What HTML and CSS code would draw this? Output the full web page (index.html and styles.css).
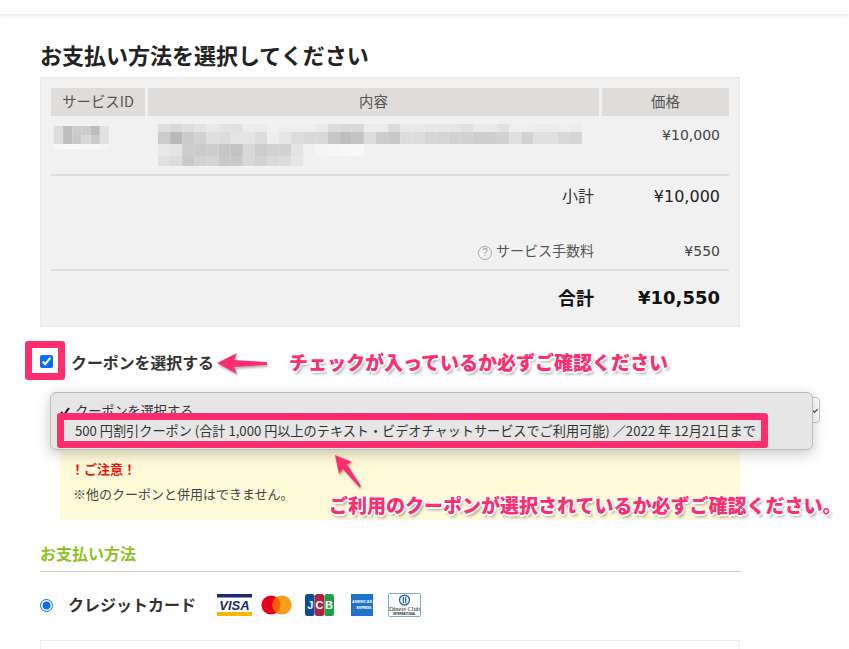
FILE: index.html
```html
<!DOCTYPE html>
<html lang="ja">
<head>
    <meta charset="UTF-8">
    <meta name="viewport" content="width=device-width, initial-scale=1.0">
    <title>お支払い方法を選択してください</title>
    <link rel="stylesheet" href="styles.css">
</head>
<body>
    <div class="page">
        <div class="topbar"></div>

        <div class="content">
            <h1>お支払い方法を選択してください</h1>

            <div class="summary">
                <div class="summary-grid">
                    <div class="th">サービスID</div>
                    <div class="th">内容</div>
                    <div class="th">価格</div>
                </div>
                <div class="summary-grid item-row">
                    <div>
                        <svg class="blur-id" viewBox="0 0 6 23" preserveAspectRatio="none">
                            <g class="r-id1"><rect x="0" fill="#dcdcdc"/><rect x="1" fill="#bebebe"/><rect x="2" fill="#cccccc"/><rect x="3" fill="#cccccc"/><rect x="4" fill="#bcbcbc"/><rect x="5" fill="#e2e2e2"/></g>
                            <g class="r-id2"><rect x="0" fill="#dcdcdc"/><rect x="1" fill="#bebebe"/><rect x="2" fill="#c8c8c8"/><rect x="3" fill="#d8d8d8"/><rect x="4" fill="#cccccc"/><rect x="5" fill="#e2e2e2"/></g>
                            <g class="r-id3"><rect x="0" fill="#f8f8f8"/><rect x="1" fill="#fbfbfb"/><rect x="2" fill="#fafafa"/><rect x="3" fill="#f8f8f8"/><rect x="4" fill="#f8f8f8"/><rect x="5" fill="#f4f4f4"/></g>
                        </svg>
                    </div>
                    <div>
                        <svg class="blur-text" viewBox="0 0 35 42" preserveAspectRatio="none">
                            <g class="r1">
                                <rect x="0" fill="#dedede"/><rect x="1" fill="#d8d8d8"/><rect x="2" fill="#dedede"/><rect x="3" fill="#e3e3e3"/><rect x="4" fill="#e8e8e8"/><rect x="5" fill="#e3e3e3"/><rect x="6" fill="#e0e0e0"/><rect x="7" fill="#ececec"/><rect x="8" fill="#ebebeb"/><rect x="9" fill="#f0f0f0"/><rect x="10" fill="#eeeeee"/><rect x="11" fill="#eeeeee"/><rect x="12" fill="#eeeeee"/><rect x="13" fill="#e8e8e8"/><rect x="14" fill="#dcdcdc"/><rect x="15" fill="#d8d8d8"/><rect x="16" fill="#d8d8d8"/><rect x="17" fill="#ececec"/><rect x="18" fill="#ececec"/><rect x="19" fill="#dcdcdc"/><rect x="20" fill="#e8e8e8"/><rect x="21" fill="#e8e8e8"/><rect x="22" fill="#e6e6e6"/><rect x="23" fill="#e6e6e6"/><rect x="24" fill="#e6e6e6"/><rect x="25" fill="#e0e0e0"/><rect x="26" fill="#eaeaea"/><rect x="27" fill="#e8e8e8"/><rect x="28" fill="#e2e2e2"/><rect x="29" fill="#eeeeee"/><rect x="30" fill="#eeeeee"/><rect x="31" fill="#ececec"/><rect x="32" fill="#ececec"/><rect x="33" fill="#eeeeee"/><rect x="34" fill="#ececec"/>
                            </g>
                            <g class="r2">
                                <rect x="0" fill="#cccccc"/><rect x="1" fill="#b9b9b9"/><rect x="2" fill="#cacaca"/><rect x="3" fill="#d2d2d2"/><rect x="4" fill="#dedede"/><rect x="5" fill="#dcdcdc"/><rect x="6" fill="#e4e4e4"/><rect x="7" fill="#e4e4e4"/><rect x="8" fill="#dcdcdc"/><rect x="9" fill="#eeeeee"/><rect x="10" fill="#e6e6e6"/><rect x="11" fill="#dcdcdc"/><rect x="12" fill="#d8d8d8"/><rect x="13" fill="#d8d8d8"/><rect x="14" fill="#c6c6c6"/><rect x="15" fill="#bebebe"/><rect x="16" fill="#c4c4c4"/><rect x="17" fill="#dcdcdc"/><rect x="18" fill="#cccccc"/><rect x="19" fill="#c8c8c8"/><rect x="20" fill="#dcdcdc"/><rect x="21" fill="#dcdcdc"/><rect x="22" fill="#d6d6d6"/><rect x="23" fill="#d4d4d4"/><rect x="24" fill="#d2d2d2"/><rect x="25" fill="#d2d2d2"/><rect x="26" fill="#cecece"/><rect x="27" fill="#cecece"/><rect x="28" fill="#d2d2d2"/><rect x="29" fill="#e0e0e0"/><rect x="30" fill="#d2d2d2"/><rect x="31" fill="#e0e0e0"/><rect x="32" fill="#e0e0e0"/><rect x="33" fill="#d8d8d8"/><rect x="34" fill="#d6d6d6"/>
                            </g>
                            <g class="r3">
                                <rect x="0" fill="#e8e8e8"/><rect x="1" fill="#e4e4e4"/><rect x="2" fill="#cccccc"/><rect x="3" fill="#cacaca"/><rect x="4" fill="#cccccc"/><rect x="5" fill="#c6c6c6"/><rect x="6" fill="#c2c2c2"/><rect x="7" fill="#d8d8d8"/><rect x="8" fill="#cccccc"/><rect x="9" fill="#d2d2d2"/><rect x="10" fill="#d2d2d2"/><rect x="11" fill="#e4e4e4"/><rect x="12" fill="#f0f0f0"/><rect x="13" fill="#f5f5f5"/><rect x="14" fill="#f6f6f6"/><rect x="15" fill="#f8f8f8"/><rect x="16" fill="#f8f8f8"/>
                            </g>
                            <g class="r4">
                                <rect x="0" fill="#e0e0e0"/><rect x="1" fill="#dcdcdc"/><rect x="2" fill="#c8c8c8"/><rect x="3" fill="#d2d2d2"/><rect x="4" fill="#d4d4d4"/><rect x="5" fill="#c8c8c8"/><rect x="6" fill="#c8c8c8"/><rect x="7" fill="#d8d8d8"/><rect x="8" fill="#d2d2d2"/><rect x="9" fill="#dadada"/><rect x="10" fill="#dcdcdc"/><rect x="11" fill="#e6e6e6"/><rect x="12" fill="#f0f0f0"/>
                            </g>
                        </svg>
                    </div>
                    <div class="price">¥10,000</div>
                </div>
                <div class="summary-grid subtotal-row">
                    <div class="row-label">小計</div>
                    <div class="subtotal-value">¥10,000</div>
                </div>
                <div class="summary-grid fee-row">
                    <div class="row-label fee-label">
                        <span class="help-icon">?</span>
                        <span>サービス手数料</span>
                    </div>
                    <div class="price">¥550</div>
                </div>
                <div class="summary-grid total-row">
                    <div class="row-label total-label">合計</div>
                    <div class="total-value">¥10,550</div>
                </div>
            </div>

            <label class="coupon-row">
                <input type="checkbox" checked>
                <span>クーポンを選択する</span>
            </label>

            <div class="coupon-select"><span class="select-arrow"></span></div>

            <div class="notice">
                <p class="notice-title">！ご注意！</p>
                <p class="notice-text">※他のクーポンと併用はできません。</p>
            </div>

            <h2 class="pay-title">お支払い方法</h2>

            <div class="pay-row">
                <input type="radio" name="pay" checked>
                <span class="pay-name">クレジットカード</span>
                <div class="cards">
                    <svg class="card" width="35" height="22" viewBox="0 0 35 22">
                        <rect width="35" height="3.5" fill="#1a2a6c"/>
                        <rect y="18" width="35" height="4" fill="#f7b600"/>
                        <text x="17.5" y="15.5" class="visa-text">VISA</text>
                    </svg>
                    <svg class="card" width="31" height="20" viewBox="0 0 31 20">
                        <circle cx="10" cy="10" r="9.6" fill="#eb001b"/>
                        <circle cx="21" cy="10" r="9.6" fill="#f79e1b"/>
                        <path d="M15.5 2.2a9.6 9.6 0 0 1 0 15.6a9.6 9.6 0 0 1 0-15.6z" fill="#ff5f00"/>
                    </svg>
                    <svg class="card" width="29" height="22" viewBox="0 0 29 22">
                        <rect x="0" width="9.6" height="22" rx="2.5" fill="#0e4c96"/>
                        <rect x="9.8" width="9.4" height="22" rx="2.5" fill="#b1203c"/>
                        <rect x="19.4" width="9.6" height="22" rx="2.5" fill="#1f9e46"/>
                        <text x="5.4" y="15" class="jcb-text">J</text>
                        <text x="14.5" y="15" class="jcb-text">C</text>
                        <text x="24" y="15" class="jcb-text">B</text>
                    </svg>
                    <svg class="card" width="22" height="22" viewBox="0 0 22 22">
                        <rect width="22" height="22" fill="#1f72cd"/>
                        <text x="11" y="9" class="amex-text" textLength="20">AMERICAN</text>
                        <text x="13" y="15" class="amex-text" textLength="15">EXPRESS</text>
                    </svg>
                    <svg class="card" width="33" height="24" viewBox="0 0 33 24">
                        <rect x="0.5" y="0.5" width="32" height="23" rx="1" fill="#fff" stroke="#7fa9c9"/>
                        <circle cx="16.5" cy="7" r="5.6" fill="#1c5a9c"/>
                        <circle cx="16.5" cy="7" r="4.3" fill="#fff"/>
                        <rect x="14.7" y="3.8" width="1.2" height="6.4" fill="#1c5a9c"/>
                        <rect x="17.1" y="3.8" width="1.2" height="6.4" fill="#1c5a9c"/>
                        <text x="16.5" y="17.5" class="diners-text">Diners Club</text>
                        <text x="16.5" y="21.5" class="diners-small">INTERNATIONAL</text>
                    </svg>
                </div>
            </div>

            <div class="card-form"></div>
        </div>

        <!-- 開いた状態のセレクト -->
        <div class="popup">
            <div class="popup-item popup-first">
                <svg class="tick" width="10" height="9" viewBox="0 0 10 9"><polyline points="1,5 3.8,8 9,1"/></svg>クーポンを選択する
            </div>
            <div class="popup-item popup-second">500 円割引クーポン (合計 1,000 円以上のテキスト・ビデオチャットサービスでご利用可能) ／2022 年 12月21日まで</div>
        </div>

        <!-- 注釈 -->
        <div class="mark mark-check"></div>
        <div class="mark mark-coupon"></div>
        <svg class="arrow arrow-left" width="54" height="26" viewBox="0 0 54 26">
            <polygon points="1,11 21,1 18,8 51,10 51,13 18,15 21,22"/>
        </svg>
        <svg class="arrow arrow-up" width="30" height="38" viewBox="0 0 30 38">
            <polygon points="1,1 18,8 13,10.5 27,32 25.5,33.5 9,15 5,20"/>
        </svg>
        <div class="note note-check">チェックが入っているか必ずご確認ください</div>
        <div class="note note-coupon">ご利用のクーポンが選択されているか必ずご確認ください。</div>
    </div>
</body>
</html>
```

FILE: styles.css
```css
html, body {
    margin: 0;
    padding: 0;
    height: 649px;
    overflow: hidden;
    background: #fff;
}
body {
    font-family: "Noto Sans CJK JP", "Noto Sans", sans-serif;
    color: #333;
}
p, h1, h2 {
    margin: 0;
}
.page {
    position: relative;
    height: 649px;
    overflow: hidden;
}
.topbar {
    height: 14px;
    background: #fff;
    box-shadow: 0 1px 5px rgba(0,0,0,0.1);
}
.content {
    width: 700px;
    margin-left: 40px;
}
h1 {
    margin-top: 26px;
    font-size: 22px;
    line-height: 28px;
    font-weight: 700;
    color: #222;
}

/* 明細 */
.summary {
    box-sizing: border-box;
    height: 250px;
    margin-top: 9px;
    padding: 10px;
    background: #f1f1f1;
    border: 1px solid #eaeaea;
}
.summary-grid {
    display: grid;
    grid-template-columns: 94px 451px 127px;
    column-gap: 3px;
}
.th {
    box-sizing: border-box;
    height: 28px;
    line-height: 25px;
    background: #dfdcda;
    color: #555;
    font-size: 14.4px;
    text-align: center;
}
.item-row {
    height: 58px;
    border-bottom: 2px solid #dddddd;
}
.blur-id {
    display: block;
    width: 55px;
    height: 23px;
    margin: 10px 0 0 3px;
}
.r-id1 rect { y: 0; height: 9px; width: 1px; }
.r-id2 rect { y: 9px; height: 9px; width: 1px; }
.r-id3 rect { y: 18px; height: 5px; width: 1px; }
.blur-text {
    display: block;
    width: 424px;
    height: 42px;
    margin: 8px 0 0 10px;
}
.r1 rect { y: 0; height: 8px; width: 1px; }
.r2 rect { y: 8px; height: 12px; width: 1px; }
.r3 rect { y: 20px; height: 12px; width: 1px; }
.r4 rect { y: 32px; height: 10px; width: 1px; }
.price {
    padding: 9px 9px 0 0;
    font-family: "DejaVu Sans", sans-serif;
    font-size: 14px;
    line-height: 20px;
    text-align: right;
    color: #444;
}
.row-label {
    grid-column: 1 / 3;
    padding-right: 5px;
    padding-bottom: 2px;
    text-align: right;
    font-size: 16px;
    color: #333;
}
.subtotal-row {
    height: 40px;
    align-items: center;
}
.subtotal-value {
    padding-right: 9px;
    font-family: "DejaVu Sans", sans-serif;
    font-size: 16px;
    text-align: right;
    color: #222;
}
.fee-row {
    box-sizing: border-box;
    height: 55px;
    border-bottom: 2px solid #dddddd;
    align-items: end;
    padding-bottom: 8px;
}
.fee-row .price {
    padding-top: 0;
}
.fee-label {
    display: flex;
    justify-content: flex-end;
    align-items: center;
    gap: 4px;
    box-sizing: border-box;
    height: 20px;
    font-size: 14px;
    color: #555;
}
.help-icon {
    box-sizing: border-box;
    width: 14px;
    height: 14px;
    margin-top: 5px;
    border: 1px solid #aaa;
    border-radius: 50%;
    font-family: "Liberation Sans", sans-serif;
    font-size: 10px;
    line-height: 12px;
    text-align: center;
    color: #999;
}
.total-row {
    height: 53px;
    align-items: center;
}
.total-label {
    font-size: 18px;
    font-weight: 700;
    color: #111;
}
.total-value {
    padding-right: 9px;
    font-family: "DejaVu Sans", sans-serif;
    font-size: 18px;
    font-weight: 700;
    text-align: right;
    color: #111;
}

/* クーポン */
.coupon-row {
    display: flex;
    align-items: center;
    gap: 18px;
    height: 30px;
    margin-top: 19px;
    font-size: 15.9px;
    font-weight: 700;
    color: #333;
}
.coupon-row span {
    padding-top: 2px;
}
.coupon-row input,
.pay-row input {
    margin: 0;
    accent-color: #0b6cf5;
}
.coupon-select {
    position: relative;
    box-sizing: border-box;
    width: 760px;
    height: 26px;
    margin: 21px 0 0 20px;
    background: #fff;
    border: 1px solid #c4c4c4;
    border-radius: 4px;
}
.select-arrow {
    position: absolute;
    right: 2px;
    top: 9px;
    width: 4px;
    height: 4px;
    border-right: 1px solid #333;
    border-bottom: 1px solid #333;
    transform: rotate(45deg);
}
.notice {
    box-sizing: border-box;
    height: 89px;
    margin: 8px 0 0 20px;
    padding: 29px 0 0 13px;
    background: #fffbd9;
}
.notice-title {
    margin-left: -2px;
    font-size: 13px;
    line-height: 18px;
    font-weight: 700;
    color: #e8170f;
}
.notice-text {
    margin-top: 6px;
    font-size: 13px;
    line-height: 20px;
    color: #444;
}
.pay-title {
    margin-top: 21px;
    padding-bottom: 6px;
    border-bottom: 1px solid #cccccc;
    font-size: 16px;
    line-height: 24px;
    font-weight: 700;
    color: #8dc21f;
}
.pay-row {
    display: flex;
    align-items: center;
    height: 30px;
    margin-top: 18px;
}
.pay-name {
    width: 149px;
    margin-left: 15px;
    padding-bottom: 2px;
    font-size: 16px;
    font-weight: 700;
    color: #333;
}
.cards {
    display: flex;
    align-items: center;
}
.card {
    display: block;
    margin-right: 9px;
}
.card:nth-child(2) { margin-right: 13px; }
.card:nth-child(3) { margin-right: 17px; }
.card:nth-child(4) { margin-right: 15px; }
.visa-text {
    font-family: "Liberation Sans", sans-serif;
    font-size: 13px;
    font-weight: 700;
    font-style: italic;
    text-anchor: middle;
    fill: #1a2a6c;
}
.jcb-text {
    font-family: "Liberation Sans", sans-serif;
    font-size: 11px;
    font-weight: 700;
    text-anchor: middle;
    fill: #fff;
}
.amex-text {
    font-family: "Liberation Sans", sans-serif;
    font-size: 3.6px;
    font-weight: 700;
    text-anchor: middle;
    fill: #fff;
}
.diners-text {
    font-family: "Liberation Serif", serif;
    font-size: 6.4px;
    text-anchor: middle;
    fill: #222;
}
.diners-small {
    font-family: "Liberation Sans", sans-serif;
    font-size: 2.8px;
    font-weight: 700;
    text-anchor: middle;
    fill: #222;
}
.card-form {
    height: 60px;
    margin-top: 20px;
    border: 1px solid #eeeeee;
}

/* セレクトのメニュー */
.popup {
    position: absolute;
    left: 50px;
    top: 392px;
    box-sizing: border-box;
    width: 763px;
    height: 58px;
    padding: 7px 0 0 9px;
    background: #e6e6e6;
    border: 1px solid #bdbdbd;
    border-radius: 6px;
    box-shadow: 0 4px 14px rgba(0,0,0,0.22);
    font-size: 13.15px;
    color: #333;
}
.popup-item {
    height: 21px;
    line-height: 21px;
    white-space: nowrap;
}
.tick {
    margin-right: 5px;
    fill: none;
    stroke: #111;
    stroke-width: 2;
}
.popup-second {
    margin-top: -1px;
    padding-left: 15px;
}

/* 注釈 */
.mark {
    position: absolute;
    box-sizing: border-box;
    border: 7px solid #fd2e70;
    border-radius: 3px;
}
.mark-check {
    left: 25px;
    top: 341px;
    width: 40px;
    height: 39px;
}
.mark-coupon {
    left: 57px;
    top: 413px;
    width: 711px;
    height: 35px;
}
.arrow {
    position: absolute;
    filter: drop-shadow(1px 2px 1px rgba(0,0,0,0.3));
}
.arrow polygon {
    fill: #fd2e70;
}
.arrow-left {
    left: 216px;
    top: 352px;
}
.arrow-up {
    left: 334px;
    top: 454px;
}
.note {
    position: absolute;
    font-size: 19px;
    line-height: 26px;
    font-weight: 900;
    white-space: nowrap;
    color: #fd2e70;
    text-shadow: 1px 1px 0 #fff, -1px -1px 0 #fff, 1px -1px 0 #fff, -1px 1px 0 #fff, 2px 0 0 #fff, 0 2px 0 #fff, 2px 3px 3px rgba(0,0,0,0.35);
}
.note-check {
    left: 289px;
    top: 349px;
}
.note-coupon {
    left: 329px;
    top: 492px;
}
```
